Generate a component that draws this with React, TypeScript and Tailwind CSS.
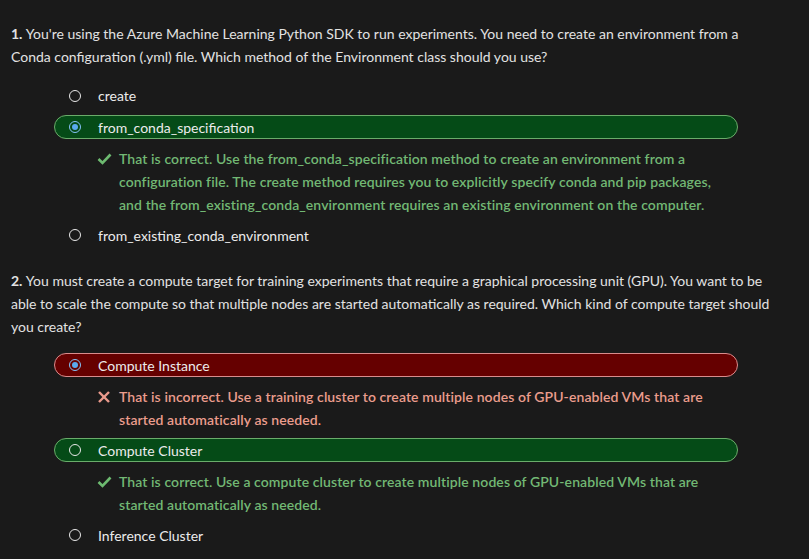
import React from "react";

type Opt = {
  label: string;
  state?: "correct" | "wrong";
  selected?: boolean;
  feedback?: { kind: "ok" | "bad"; lines: string[] };
};

const Radio = ({ selected }: { selected?: boolean }) =>
  selected ? (
    <span className="flex h-[12px] w-[12px] shrink-0 items-center justify-center rounded-full border-[1.5px] border-[#86c2f7]">
      <span className="h-[6px] w-[6px] rounded-full bg-[#5aa9ef]" />
    </span>
  ) : (
    <span className="h-[12px] w-[12px] shrink-0 rounded-full border-[1.5px] border-[#e8e8e8]" />
  );

const Check = () => (
  <svg width="15" height="12" viewBox="0 0 15 12" className="mt-[6px] shrink-0">
    <polyline points="1.5,6 5.5,10 13.5,1.5" fill="none" stroke="#6dba70" strokeWidth="2.6" strokeLinecap="butt" strokeLinejoin="miter" />
  </svg>
);

const Cross = () => (
  <svg width="14" height="12" viewBox="0 0 14 12" className="mt-[6px] shrink-0">
    <line x1="2" y1="1" x2="12" y2="11" stroke="#ea9a8c" strokeWidth="2.4" />
    <line x1="12" y1="1" x2="2" y2="11" stroke="#ea9a8c" strokeWidth="2.4" />
  </svg>
);

const Option = ({ o }: { o: Opt }) => {
  const pill =
    o.state === "correct"
      ? "border border-[#6aac6a] bg-[#054b17]"
      : o.state === "wrong"
      ? "border border-[#d98c8c] bg-[#650000]"
      : "border border-transparent";
  return (
    <>
      <div className={`flex h-[24px] w-[684px] items-center rounded-full pl-[14px] ${pill}`}>
        <Radio selected={o.selected} />
        <span className="ml-[17px] whitespace-nowrap text-[14px] text-[#ececec]">{o.label}</span>
      </div>
      {o.feedback && (
        <div className="flex pl-[43px]">
          <span className="w-[22px] shrink-0">{o.feedback.kind === "ok" ? <Check /> : <Cross />}</span>
          <div
            className={`text-[14px] font-semibold leading-[23px] tracking-[0.09px] ${
              o.feedback.kind === "ok" ? "text-[#72b874]" : "text-[#eb9d8d]"
            }`}
          >
            {o.feedback.lines.map((l, i) => (
              <div key={i} className="whitespace-nowrap">
                {l}
              </div>
            ))}
          </div>
        </div>
      )}
    </>
  );
};

const Question = ({ n, lines, opts, className }: { n: string; lines: string[]; opts: Opt[]; className?: string }) => (
  <div className={className}>
    <div className="text-[14px] leading-[23px] text-[#e2e2e2]">
      {lines.map((l, i) => (
        <div key={i} className="whitespace-nowrap">
          {i === 0 && <span className="font-bold">{n} </span>}
          {l}
        </div>
      ))}
    </div>
    <div className="ml-[43px] mt-[15.5px] flex flex-col gap-[7.5px]">
      {opts.map((o, i) => (
        <Option key={i} o={o} />
      ))}
    </div>
  </div>
);

export default function App() {
  return (
    <div
      className="h-[559px] w-[809px] overflow-hidden bg-[#1a1a1a] pl-[11px] pt-[22px]"
      style={{ fontFamily: 'Lato, "Noto Sans", sans-serif' }}
    >
      <Question
        n="1."
        lines={[
          "You're using the Azure Machine Learning Python SDK to run experiments. You need to create an environment from a",
          "Conda configuration (.yml) file. Which method of the Environment class should you use?",
        ]}
        opts={[
          { label: "create" },
          {
            label: "from_conda_specification",
            state: "correct",
            selected: true,
            feedback: {
              kind: "ok",
              lines: [
                "That is correct. Use the from_conda_specification method to create an environment from a",
                "configuration file. The create method requires you to explicitly specify conda and pip packages,",
                "and the from_existing_conda_environment requires an existing environment on the computer.",
              ],
            },
          },
          { label: "from_existing_conda_environment" },
        ]}
      />
      <Question
        className="mt-[21.5px]"
        n="2."
        lines={[
          "You must create a compute target for training experiments that require a graphical processing unit (GPU). You want to be",
          "able to scale the compute so that multiple nodes are started automatically as required. Which kind of compute target should",
          "you create?",
        ]}
        opts={[
          {
            label: "Compute Instance",
            state: "wrong",
            selected: true,
            feedback: {
              kind: "bad",
              lines: [
                "That is incorrect. Use a training cluster to create multiple nodes of GPU-enabled VMs that are",
                "started automatically as needed.",
              ],
            },
          },
          {
            label: "Compute Cluster",
            state: "correct",
            feedback: {
              kind: "ok",
              lines: [
                "That is correct. Use a compute cluster to create multiple nodes of GPU-enabled VMs that are",
                "started automatically as needed.",
              ],
            },
          },
          { label: "Inference Cluster" },
        ]}
      />
    </div>
  );
}
